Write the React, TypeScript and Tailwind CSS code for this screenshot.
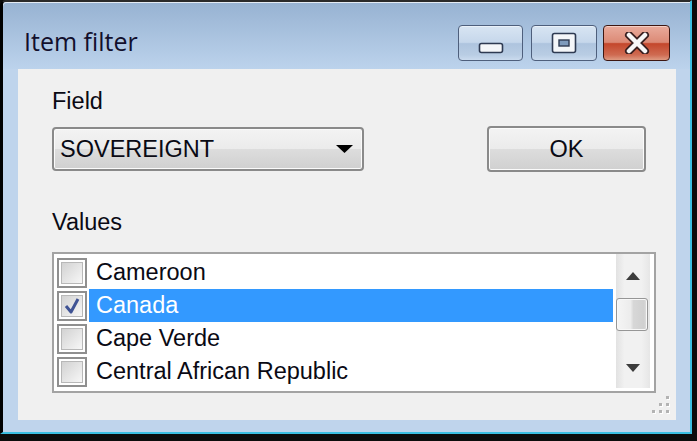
import React from 'react';

const rows = [
  { name: 'Cameroon', checked: false, selected: false },
  { name: 'Canada', checked: true, selected: true },
  { name: 'Cape Verde', checked: false, selected: false },
  { name: 'Central African Republic', checked: false, selected: false },
];

const CheckBox = ({ checked }: { checked: boolean }) => (
  <div className="mt-[2px] w-[30px] h-[30px] shrink-0 border-2 border-[#8f8f8f] bg-white p-[2px]">
    <div className="relative w-full h-full border border-[#b8b8b8] bg-[linear-gradient(135deg,#d2d2d2,#f7f7f7)]">
      {checked && (
        <svg className="absolute inset-0" width="20" height="20" viewBox="0 0 20 20">
          <path d="M4 10 L9 16 L16 3" fill="none" stroke="#3f5394" strokeWidth="3" strokeLinejoin="round" />
        </svg>
      )}
    </div>
  </div>
);

const CaptionButton = ({ kind }: { kind: 'min' | 'max' | 'close' }) => {
  const base =
    kind === 'close'
      ? 'border-[#3d1712] bg-[linear-gradient(to_bottom,#e9ab9c_0%,#dc8a76_48%,#c4472c_52%,#cf6b52_85%,#de9a82_100%)] shadow-[inset_0_1px_0_#f5cfc5]'
      : 'border-[#4e5f7c] bg-[linear-gradient(to_bottom,#d8e5f3_0%,#c6d7eb_48%,#aec4de_52%,#b9cde4_85%,#cbdbee_100%)] shadow-[inset_0_1px_0_#eaf1f9]';
  const width = kind === 'min' ? 'w-[65px]' : kind === 'max' ? 'w-[66px]' : 'w-[67px]';
  return (
    <div className={`${width} h-[36px] rounded-[4px] border ${base} flex items-center justify-center`}>
      {kind === 'min' && (
        <svg width="26" height="36" viewBox="0 0 26 36">
          <rect x="1.5" y="18.5" width="23" height="9" rx="2" fill="#f4f6f9" stroke="#2e3a52" strokeWidth="1.6" />
        </svg>
      )}
      {kind === 'max' && (
        <svg width="26" height="22" viewBox="0 0 26 22">
          <rect x="1.5" y="1.5" width="23" height="19" rx="2" fill="#f4f6f9" stroke="#2e3a52" strokeWidth="1.6" />
          <rect x="8" y="8" width="10" height="6" fill="#7f9bbd" stroke="#2e3a52" strokeWidth="1.4" />
        </svg>
      )}
      {kind === 'close' && (
        <svg width="26" height="22" viewBox="0 0 26 22">
          <path d="M5 3 L21 19 M21 3 L5 19" stroke="#3a2020" strokeWidth="8" strokeLinecap="round" />
          <path d="M5 3 L21 19 M21 3 L5 19" stroke="#f7f7f7" strokeWidth="4.5" strokeLinecap="round" />
        </svg>
      )}
    </div>
  );
};

const Arrow = ({ up }: { up: boolean }) => (
  <svg width="14" height="8" viewBox="0 0 14 8">
    <path d={up ? 'M0 8 L7 0 L14 8 Z' : 'M0 0 L14 0 L7 8 Z'} fill="#3c3c3c" />
  </svg>
);

export default function App() {
  return (
    <div className="w-[697px] h-[441px] bg-[#0c0c0c] overflow-hidden font-['Liberation_Sans',Arial,sans-serif] text-[23.5px] text-[#0a0a14]">
      <div className="w-[692px] h-[434px] border-l-[3px] border-t-2 border-r-2 border-b-2 border-l-black border-t-[#2a2a2a] border-r-[#3bbfe2] border-b-[#3bbfe2] rounded-tl-[6px] bg-[#bfd4ec] flex flex-col">
        {/* Title bar */}
        <div className="h-[67px] flex items-start rounded-tl-[4px] bg-[linear-gradient(to_bottom,#97b2d2,#bcd3ec)] shadow-[inset_0_1px_0_#e4ebf4]">
          <span className="ml-[21px] mt-[24px] leading-[30px] text-[25px] text-[#120f2c] font-['Open_Sans',sans-serif]">
            Item filter
          </span>
          <div className="ml-auto mt-[23px] mr-[20px] flex">
            <CaptionButton kind="min" />
            <div className="w-[8px]" />
            <CaptionButton kind="max" />
            <div className="w-[6px]" />
            <CaptionButton kind="close" />
          </div>
        </div>

        {/* Client area */}
        <div className="relative ml-[15px] w-[658px] h-[351px] bg-[#f0f0f0] pl-[34px] pt-[19px]">
          <div className="leading-[26px]">Field</div>
          <div className="mt-[12px] flex items-start">
            <div className="mt-[1px] w-[312px] h-[44px] rounded-[4px] border-2 border-[#8a8a8a] bg-[linear-gradient(to_bottom,#f3f3f3_0%,#ebebeb_50%,#dddddd_50%,#d0d0d0_100%)] shadow-[inset_0_0_0_1px_#fbfbfb] flex items-center pl-[6px] pr-[9px]">
              <span className="leading-[26px]">SOVEREIGNT</span>
              <svg className="ml-auto" width="17" height="8" viewBox="0 0 17 8">
                <path d="M0 0 L17 0 L8.5 8 Z" fill="#000" />
              </svg>
            </div>
            <div className="ml-[123px] w-[159px] h-[46px] rounded-[4px] border-2 border-[#8a8a8a] bg-[linear-gradient(to_bottom,#f3f3f3_0%,#ebebeb_50%,#dddddd_50%,#d0d0d0_100%)] shadow-[inset_0_0_0_1px_#fbfbfb] flex items-center justify-center">
              <span className="leading-[26px]">OK</span>
            </div>
          </div>
          <div className="mt-[37px] leading-[26px]">Values</div>

          {/* List */}
          <div className="mt-[17px] w-[604px] h-[141px] border-2 border-[#a3a3a3] bg-white flex items-start">
            <div className="w-[559px] pt-[2px] pl-[3px]">
              {rows.map((r) => (
                <div key={r.name} className="h-[33px] flex items-start">
                  <CheckBox checked={r.checked} />
                  <div
                    className={`ml-[2px] flex-1 h-[33px] leading-[33px] pl-[7px] whitespace-nowrap ${
                      r.selected ? 'bg-[#3399ff] text-white' : ''
                    }`}
                  >
                    {r.name}
                  </div>
                </div>
              ))}
            </div>
            <div className="ml-[3px] w-[34px] h-[134px] flex flex-col bg-[linear-gradient(to_right,#e2e2e2,#f1f1f1_25%,#f1f1f1_75%,#e6e6e6)]">
              <div className="h-[44px] flex items-center justify-center">
                <Arrow up />
              </div>
              <div className="w-[32px] h-[33px] rounded-[3px] border border-[#969696] bg-[linear-gradient(to_right,#f5f5f5_0%,#ececec_45%,#d7d7d7_55%,#d0d0d0_90%,#e2e2e2_100%)] shadow-[inset_0_0_0_1px_#f8f8f8]" />
              <div className="mt-auto h-[40px] flex items-center justify-center">
                <Arrow up={false} />
              </div>
            </div>
          </div>

          {/* Size grip */}
          <svg className="absolute right-[4px] bottom-[5px]" width="20" height="19" viewBox="0 0 20 19">
            {[
              [14, 0],
              [7, 7],
              [14, 7],
              [0, 14],
              [7, 14],
              [14, 14],
            ].map(([x, y]) => (
              <g key={`${x}-${y}`}>
                <rect x={x + 1} y={y + 1} width="3" height="3" fill="#ffffff" />
                <rect x={x} y={y} width="3" height="3" fill="#b3b3b3" />
              </g>
            ))}
          </svg>
        </div>
      </div>
    </div>
  );
}
